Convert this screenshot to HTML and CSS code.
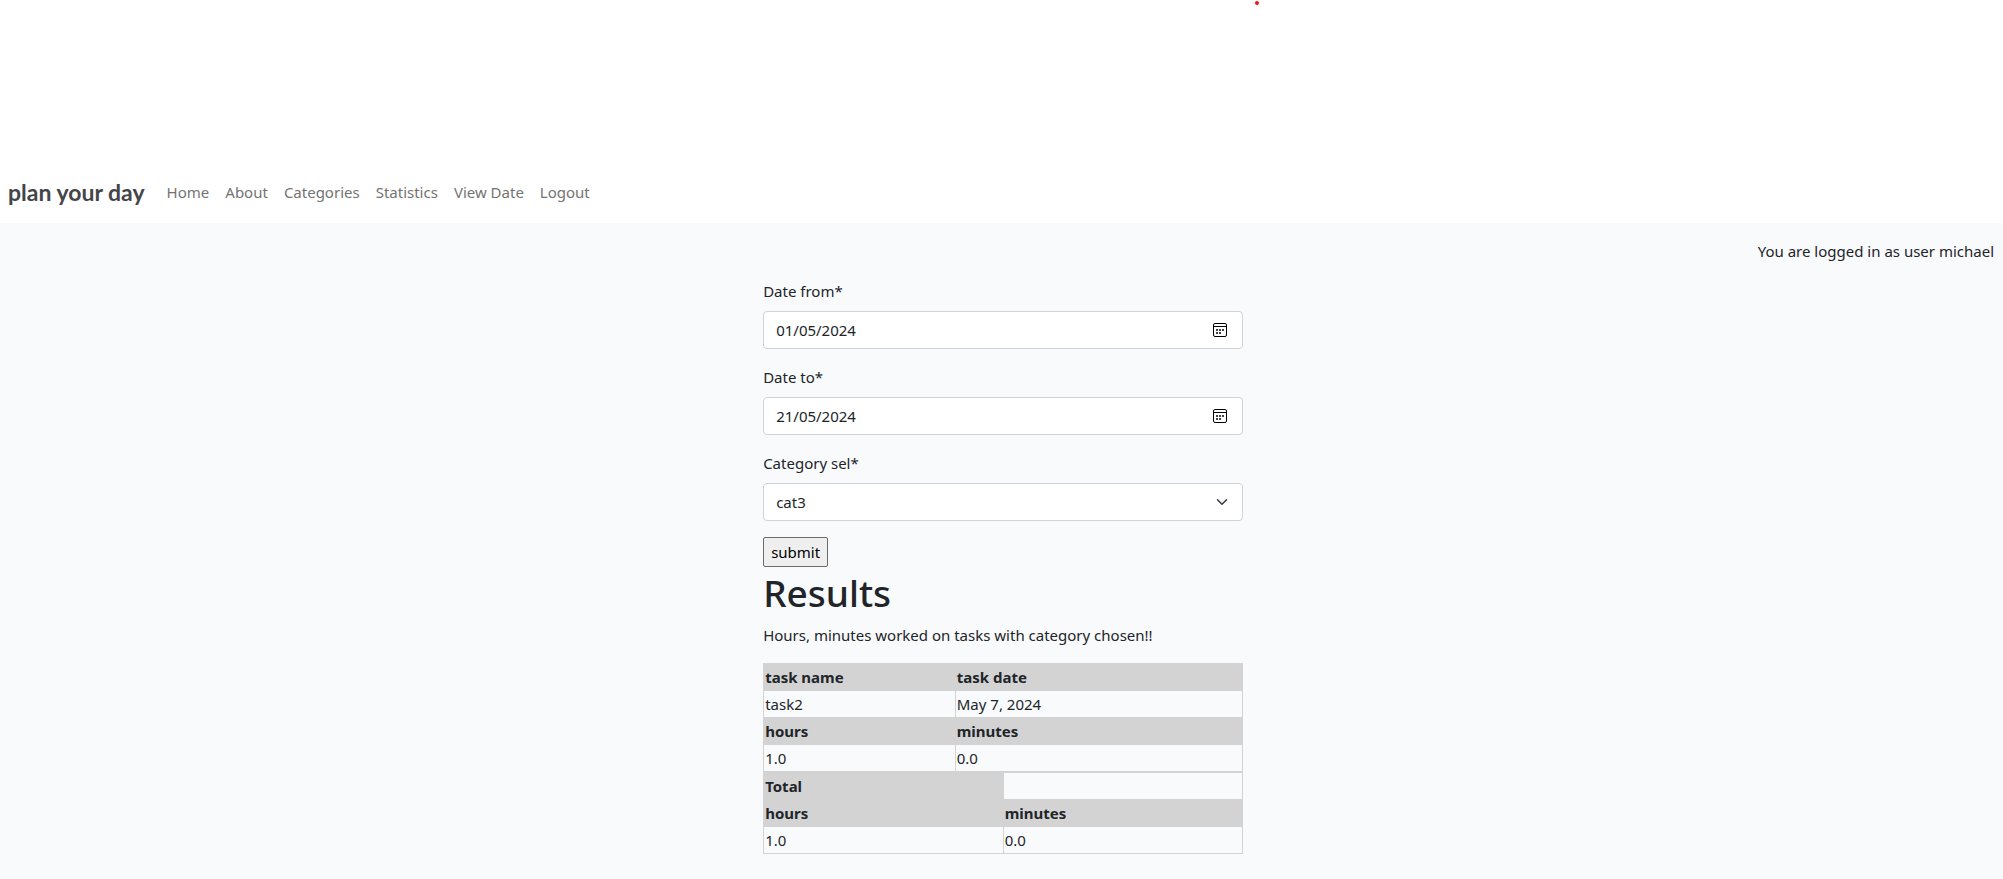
FILE: index.html
```html
<!DOCTYPE html>
<html lang="en-GB">
<head>
<meta charset="utf-8">
<title>plan your day</title>
<link rel="stylesheet" href="styles.css">
</head>
<body>
<header class="site-header">
  <div class="banner"><span class="banner-dot"></span></div>
  <nav class="navbar">
    <a class="brand" href="#">plan your day</a>
    <ul class="nav-list">
      <li><a class="nav-link" href="#">Home</a></li>
      <li><a class="nav-link" href="#">About</a></li>
      <li><a class="nav-link" href="#">Categories</a></li>
      <li><a class="nav-link" href="#">Statistics</a></li>
      <li><a class="nav-link" href="#">View Date</a></li>
      <li><a class="nav-link" href="#">Logout</a></li>
    </ul>
  </nav>
</header>
<p class="user-status">You are logged in as user michael</p>
<main class="content">
  <form>
    <div class="field">
      <label for="date-from">Date from*</label>
      <div class="control">
        <input class="form-control" id="date-from" type="text" value="01/05/2024" required>
        <svg class="calendar-icon" viewBox="0 0 14 14" aria-hidden="true"><rect x=".5" y=".5" width="13" height="13" rx="1.5" fill="none" stroke="#000"/><path d="M1 3.5h12" stroke="#000"/><path d="M3 6h2v2H3zM6 6h2v2H6zM9 6h2v2H9zM3 9h2v2H3zM6 9h2v2H6z" fill="#444"/></svg>
      </div>
    </div>
    <div class="field">
      <label for="date-to">Date to*</label>
      <div class="control">
        <input class="form-control" id="date-to" type="text" value="21/05/2024" required>
        <svg class="calendar-icon" viewBox="0 0 14 14" aria-hidden="true"><rect x=".5" y=".5" width="13" height="13" rx="1.5" fill="none" stroke="#000"/><path d="M1 3.5h12" stroke="#000"/><path d="M3 6h2v2H3zM6 6h2v2H6zM9 6h2v2H9zM3 9h2v2H3zM6 9h2v2H6z" fill="#444"/></svg>
      </div>
    </div>
    <div class="field">
      <label for="category">Category sel*</label>
      <div class="control">
        <select class="form-control" id="category" required><option>cat3</option></select>
        <svg class="chevron-icon" viewBox="0 0 16 16" aria-hidden="true"><path d="m2 5 6 6 6-6" fill="none" stroke="#343a40" stroke-width="2" stroke-linecap="round" stroke-linejoin="round"/></svg>
      </div>
    </div>
    <button class="submit" type="submit">submit</button>
  </form>
  <h1>Results</h1>
  <p class="summary">Hours, minutes worked on tasks with category chosen!!</p>
  <table class="results">
    <colgroup><col class="col-name"><col></colgroup>
    <tr><th>task name</th><th>task date</th></tr>
    <tr><td>task2</td><td>May 7, 2024</td></tr>
    <tr><th>hours</th><th>minutes</th></tr>
    <tr><td>1.0</td><td>0.0</td></tr>
  </table>
  <table class="results">
    <colgroup><col class="col-half"><col></colgroup>
    <tr><th>Total</th><td></td></tr>
    <tr><th>hours</th><th>minutes</th></tr>
    <tr><td>1.0</td><td>0.0</td></tr>
  </table>
</main>
</body>
</html>
```
FILE: styles.css
```css
*, *::before, *::after { box-sizing: border-box; }

body {
  margin: 0;
  background: #f9fafc;
  color: #212529;
  font-family: "Segoe UI", "Noto Sans", "Open Sans", sans-serif;
  font-size: 15px;
  line-height: 24px;
}

.site-header { background: #fff; }

.banner {
  height: 160px;
  padding: 1px 0 0 62.65%;
}

.banner-dot {
  display: block;
  width: 4px;
  height: 4px;
  border-radius: 50%;
  background: #f8121b;
}

.navbar {
  display: flex;
  align-items: center;
  gap: 22px;
  padding: 12px 8px 11px;
}

.brand {
  color: #444549;
  font-family: Lato, sans-serif;
  font-size: 23px;
  font-weight: 700;
  line-height: 40px;
  text-decoration: none;
}

.nav-list {
  display: flex;
  gap: 16px;
  margin: 0;
  padding: 0;
  list-style: none;
}

.nav-link {
  color: #737373;
  text-decoration: none;
}

.user-status {
  margin: 16px 9px;
  text-align: right;
}

.content {
  width: 24%;
  min-width: 320px;
  max-width: 480px;
  margin-left: 38.1%;
  padding-bottom: 24px;
}

.field { margin-bottom: 16px; }

.field label {
  display: block;
  margin-bottom: 8px;
}

.control { position: relative; }

.form-control {
  display: block;
  width: 100%;
  height: 38px;
  padding: 6px 12px;
  border: 1px solid #ced4da;
  border-radius: 4px;
  background: #fff;
  color: #212529;
  font: inherit;
  appearance: none;
}

.calendar-icon {
  position: absolute;
  top: 12px;
  right: 16px;
  width: 14px;
  height: 14px;
}

.chevron-icon {
  position: absolute;
  top: 13px;
  right: 15px;
  width: 12px;
  height: 12px;
}

.submit {
  display: block;
  height: 30px;
  padding: 1px 7px;
  border: 1px solid #6b6b6b;
  border-radius: 2px;
  background: #efefef;
  color: #000;
  font: inherit;
}

h1 {
  margin: 2px 0 6px;
  font-size: 37px;
  font-weight: 500;
  line-height: 48px;
}

.summary { margin: 0 0 16px; }

.results {
  width: 100%;
  border-collapse: collapse;
  table-layout: fixed;
}

.results th,
.results td {
  height: 27px;
  padding: 1px;
  border: 1px solid #d3d3d3;
  text-align: left;
}

.results th {
  background: #d3d3d3;
  font-weight: 700;
}

.col-name { width: 40%; }
.col-half { width: 50%; }
```
